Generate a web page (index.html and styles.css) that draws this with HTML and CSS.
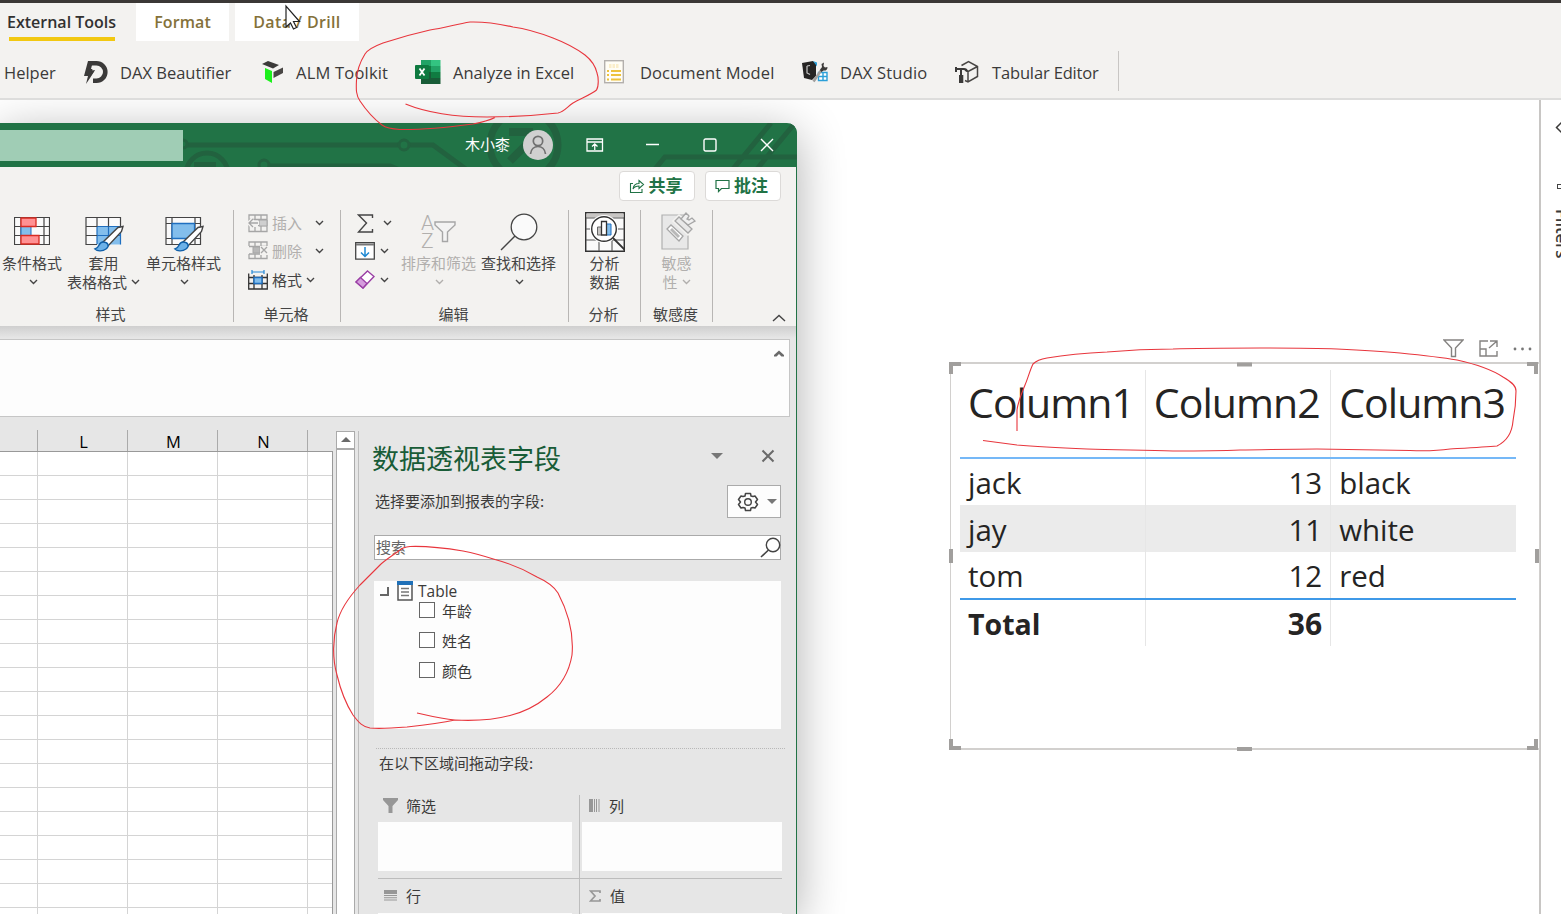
FILE: index.html
```html
<!DOCTYPE html>
<html lang="zh-CN">
<head>
<meta charset="utf-8">
<title>Power BI Desktop</title>
<link rel="stylesheet" href="styles.css">
</head>
<body>
<svg width="0" height="0" class="defs">
  <symbol id="chev" viewBox="0 0 9 6"><path d="M1 1l3.5 3.5L8 1" fill="none" stroke="currentColor" stroke-width="1.4"/></symbol>
</svg>

<header class="pbi-top">
  <nav class="tabs">
    <span class="tab tab-active">External Tools</span>
    <span class="tab tab-format">Format</span>
    <span class="tab tab-drill">Data / Drill</span>
  </nav>
  <div class="tools">
    <span class="tool">Helper</span>
    <span class="tool"><i class="ti w36"><svg width="24" height="25" viewBox="0 0 24 25"><path d="M6 3.200h6.500a8.300 8.300 0 0 1 0 17.600H9" fill="none" stroke="#3b3a39" stroke-width="4.600"/><path d="M4 1h5L7 9h5L2 24l2-8H0z" fill="#3b3a39"/><path d="M10.500 6L9 9.500h3.500L8 17" fill="none" stroke="#f3f2f0" stroke-width="1.300"/></svg></i>DAX Beautifier</span>
    <span class="tool"><i class="ti w34"><svg width="22" height="24" viewBox="0 0 22 24"><path d="M0 4l6-3 11 4-6 3.500z" fill="#3b3a39"/><path d="M11.500 12l9.500-4.500v5.500L11.500 18z" fill="#484644"/><path d="M3 8l7 3v12l-7-4z" fill="#1cf01c"/></svg></i><span class="alm">ALM Toolkit</span></span>
    <span class="tool"><i class="ti w38"><svg width="26" height="24" viewBox="0 0 26 24"><path d="M6 0h10v6H6z" fill="#21a366"/><path d="M16 0h9.500v6H16z" fill="#33c481"/><path d="M6 6h10v6H6z" fill="#107c41"/><path d="M16 6h9.500v6H16z" fill="#21a366"/><path d="M6 12h10v6H6z" fill="#185c37"/><path d="M16 12h9.500v6H16z" fill="#107c41"/><path d="M6 18h19.500v6H6z" fill="#185c37"/><rect x="0" y="5" width="14" height="14" rx="1" fill="#0e7a40"/><path d="M4.500 8.500l5 7M9.500 8.500l-5 7" stroke="#fff" stroke-width="1.800"/></svg></i>Analyze in Excel</span>
    <span class="tool"><i class="ti w36"><svg width="20" height="24" viewBox="0 0 20 24"><rect x=".7" y=".7" width="18.600" height="22" fill="#fffdf5" stroke="#b3b0ad" stroke-width="1.400"/><path d="M5 5h10M5 7h10" stroke="#f6dfa0" stroke-width="1.200" stroke-dasharray="2.500 1"/><path d="M3 11h2m2 0h10M3 15h2m2 0h10M3 19.500h2m2 0h10" stroke="#edc23c" stroke-width="1.900"/></svg></i><span class="doc">Document Model</span></span>
    <span class="tool"><i class="ti w38"><svg width="26" height="22" viewBox="0 0 26 22"><path d="M0 2l11-2 3 3v12l-4 4-8-2z" fill="#252423"/><path d="M5 5v7l3 1.500M5 5l3-.5" fill="none" stroke="#c8c8c8" stroke-width="1.200"/><path d="M11 0l4 1.500v4z" fill="#2a9fd8"/><path d="M16.500 11.500h8.500v8h-8.500zM16.500 15.500h8.500M21 11.500v8" fill="#fff" stroke="#2a9fd8" stroke-width="1.400"/><path d="M11.500 20.500L20 8" stroke="#a19f9d" stroke-width="2.600"/><path d="M18 9l2-3-.5-3 2.500-1.500L21.500 5l1.500 1.500L25.500 6c0 3-2 4-4 3.500L19.500 11z" fill="#3b3a39"/></svg></i><span class="alm">DAX Studio</span></span>
    <span class="tool"><i class="ti w37"><svg width="24" height="24" viewBox="0 0 24 24"><path d="M6.500 5.500L13.500 1.500l9 5v10l-9.500 5.500-3-1.500M13 21.500V11.500l9.500-5M13 11.500L10 10" fill="none" stroke="#484644" stroke-width="1.500"/><path d="M1 7v5M1 9h8q2.500 0 3 2.500" fill="none" stroke="#3b3a39" stroke-width="2"/><path d="M6 9v6" stroke="#3b3a39" stroke-width="2"/><path d="M4 15h4.300v8H4z" fill="#3b3a39"/></svg></i><span class="te">Tabular Editor</span></span>
    <span class="tool-end"></span>
  </div>
</header>

<main class="pbi-main">
  <section class="canvas">
    <div class="visual">
      <div class="visual-tools">
        <svg width="21" height="19" viewBox="0 0 21 19"><path d="M1 1h19l-7.500 8v8.500h-4V9z" fill="none" stroke="#858381" stroke-width="1.400"/></svg>
        <svg width="19" height="17" viewBox="0 0 19 17"><path d="M9 1H1v15h17v-5M1 9h6v7M11 1h7v6M18 1l-8 7" fill="none" stroke="#858381" stroke-width="1.400"/></svg>
        <svg width="19" height="4" viewBox="0 0 19 4"><circle cx="2" cy="2" r="1.400" fill="#777"/><circle cx="9.500" cy="2" r="1.400" fill="#777"/><circle cx="17" cy="2" r="1.400" fill="#777"/></svg>
      </div>
      <table class="data">
        <thead><tr><th>Column1</th><th class="c2">Column2</th><th>Column3</th></tr></thead>
        <tbody>
          <tr><td>jack</td><td class="num">13</td><td>black</td></tr>
          <tr class="alt"><td>jay</td><td class="num">11</td><td>white</td></tr>
          <tr><td>tom</td><td class="num">12</td><td>red</td></tr>
        </tbody>
        <tfoot><tr><td>Total</td><td class="num">36</td><td></td></tr></tfoot>
      </table>
      <svg class="handles" width="592" height="391" viewBox="0 0 592 391"><g fill="none" stroke="#a19f9d" stroke-width="4"><path d="M2 12V2H12M578 2h9V12M2 377v9H12M578 386h9V377"/><path d="M288 2.500h15M288 387h15M2 187v14M588 187v14"/></g></svg>
    </div>
  </section>
  <aside class="filters">
    <svg class="f-chev" width="10" height="14" viewBox="0 0 10 14"><path d="M8 1L2.500 6.500 8 12" fill="none" stroke="#3b3a39" stroke-width="1.500"/></svg>
    <i class="f-icon"></i>
    <span class="f-label">Filters</span>
  </aside>
</main>

<div class="excel">
  <div class="titlebar">
    <svg class="circuit" width="797" height="44" viewBox="0 0 797 44"><g fill="none" stroke="#22623f" stroke-width="5"><path d="M187 22h211M409 22h24l34 25"/><circle cx="404" cy="22" r="5" stroke-width="3"/><circle cx="183" cy="21" r="4" stroke-width="3"/><circle cx="207" cy="51" r="21"/><path d="M194 43h22" stroke-width="8"/><circle cx="264" cy="42" r="5" stroke-width="3"/><path d="M270 43h120l12 5"/><circle cx="524" cy="22" r="34" stroke-width="7"/><path d="M509 9h20v16M510 38l20-20" stroke-width="8"/><path d="M655 46l10-12h132M733 46l38-46M757 46l38-46"/></g></svg>
    <div class="searchbox"></div>
    <div class="user"><span class="uname">木小桼</span><span class="avatar"><svg width="18" height="20" viewBox="0 0 18 20"><circle cx="9" cy="6" r="4.700" fill="none" stroke="#707070" stroke-width="1.700"/><path d="M1.500 19c1-10 14-10 15 0" fill="none" stroke="#707070" stroke-width="1.700"/></svg></span></div>
    <svg class="wc wc1" width="18" height="14" viewBox="0 0 18 14"><path d="M1 1h15.500v12H1zM1 4h15.500M8.750 12V6M6 8.500L8.750 6l2.750 2.500" fill="none" stroke="#fff" stroke-width="1.300"/></svg>
    <svg class="wc wc2" width="13" height="14" viewBox="0 0 13 14"><path d="M0 6.500h13" stroke="#fff" stroke-width="1.300"/></svg>
    <svg class="wc wc3" width="14" height="14" viewBox="0 0 14 14"><rect x="1" y="1" width="12" height="12" rx="1.500" fill="none" stroke="#fff" stroke-width="1.400"/></svg>
    <svg class="wc wc4" width="14" height="14" viewBox="0 0 14 14"><path d="M1 1l12 12M13 1L1 13" stroke="#fff" stroke-width="1.400"/></svg>
  </div>

  <div class="ribbon">
    <div class="actions">
      <span class="action"><svg width="16" height="16" viewBox="0 0 16 16"><path d="M4 5.500H1.500v9H13V11M4 11C4.500 7.500 7 5.500 10 5.500V2.500l4.500 4L10 10.500V8C7.500 8 5.500 8.500 4 11z" fill="none" stroke="#217346" stroke-width="1.100"/></svg><span>共享</span></span>
      <span class="action"><svg width="15" height="14" viewBox="0 0 15 14"><path d="M1 1.500h13v8H6.500L3.500 12.500v-3H1z" fill="none" stroke="#217346" stroke-width="1.200"/></svg><span>批注</span></span>
    </div>
    <div class="groups">
      <div class="group g-style">
        <div class="gbody">
          <div class="big b1"><i><svg width="36" height="29" viewBox="0 0 36 29"><path d="M.5.500h35v27H.5zM7 .5v27M30 .5v27M.5 9.500h35M.5 18.500h35" fill="#fafafa" stroke="#444" stroke-width="1.200"/><path d="M7 9.500h10v9H7z" fill="#83beec" stroke="#1f6fc0"/><path d="M7 1h15v8.500H7zM7 18.500h18v8.500H7z" fill="#ff9193" stroke="#d92b22" stroke-width="1.300"/></svg></i><span>条件格式</span><svg class="cv"><use href="#chev"/></svg></div>
          <div class="big b2"><i><svg width="40" height="35" viewBox="0 0 40 35"><path d="M1 .5h34.500v27H1z" fill="#fafafa"/><path d="M12 9.500h23.500v18H12z" fill="#83beec"/><path d="M12 27V9.500h23.500V27.500M12 18.500h23M23.500 9.500v18" fill="none" stroke="#1f6fc0" stroke-width="1.200"/><path d="M12 27.500H1V.5h34.500v9M12 .5v9M23.500 .5v9M1 9.500h11M1 18.500h11" fill="none" stroke="#444" stroke-width="1.200"/><path d="M17 26L33 10.500l5-1-1.500 5L23 29z" fill="#fff" stroke="#444" stroke-width="1.400"/><path d="M10 32c5-1 3-7 8-7s7 4 3 7c-4 3-9 2-11 0z" fill="#6cb1e8" stroke="#0f5fa8" stroke-width="1.400"/></svg></i><span>套用</span><span>表格格式<svg class="cv"><use href="#chev"/></svg></span></div>
          <div class="big b3"><i><svg width="40" height="35" viewBox="0 0 40 35"><path d="M1 .5h34.500v27H1zM7 .5v27M30 .5v27M1 6.500h34M1 21.500h34" fill="#fafafa" stroke="#444" stroke-width="1.200"/><path d="M7 6.500h22.500v15H7z" fill="#83beec" stroke="#1f6fc0" stroke-width="1.300"/><path d="M17 26L33 10.500l5-1-1.500 5L23 29z" fill="#fff" stroke="#444" stroke-width="1.400"/><path d="M10 32c5-1 3-7 8-7s7 4 3 7c-4 3-9 2-11 0z" fill="#6cb1e8" stroke="#0f5fa8" stroke-width="1.400"/></svg></i><span>单元格样式</span><svg class="cv"><use href="#chev"/></svg></div>
        </div>
        <div class="glabel">样式</div>
      </div>
      <div class="group g-cells">
        <div class="gbody rows">
          <div class="small off"><svg width="20" height="19" viewBox="0 0 20 19"><path d="M1 1h18v16.500H1zM7 1v4M13 1v16M1 5.500h18M10 11.500h9M7 13v5" fill="none" stroke="#a6a6a6" stroke-width="1.300"/><path d="M11 6h8v6h-8z" fill="#cfcfcf" stroke="#a6a6a6"/><path d="M0 9h11M5 5L1 9l4 4" fill="none" stroke="#f3f2f0" stroke-width="4"/><path d="M1 9h9M5 5L1 9l4 4" fill="none" stroke="#a6a6a6" stroke-width="1.300"/></svg><span>插入</span><svg class="cv"><use href="#chev"/></svg></div>
          <div class="small off"><svg width="20" height="19" viewBox="0 0 20 19"><path d="M1 5V1h18v4M7 1v4M13 1v4M1 5.500h18M1 13h18M1 13v4.500h18V13M7 13v5M13 13v5" fill="none" stroke="#a6a6a6" stroke-width="1.300"/><path d="M5 6h7v6H5z" fill="#b8b8b8" stroke="#a6a6a6"/><path d="M12 5h8v9h-8z" fill="#f3f2f0"/><path d="M13 6l6 6M19 6l-6 6" stroke="#a6a6a6" stroke-width="1.300"/></svg><span>删除</span><svg class="cv"><use href="#chev"/></svg></div>
          <div class="small fmt"><svg width="20" height="20" viewBox="0 0 20 20"><path d="M.7 3.500v15.500h18.600V3.500M.7 7.500h18.600M.7 13.500h18.600M6 5v14M14 5v14" fill="none" stroke="#333" stroke-width="1.300"/><path d="M6 7.500h8v6H6z" fill="#83beec" stroke="#1f6fc0" stroke-width="1.400"/><path d="M4 2h12M4 0v4M16 0v4" stroke="#2488d8" stroke-width="1.200"/></svg><span>格式</span><svg class="cv"><use href="#chev"/></svg></div>
        </div>
        <div class="glabel">单元格</div>
      </div>
      <div class="group g-edit">
        <div class="gbody">
          <div class="mini rows">
            <div class="small sum"><svg width="17" height="19" viewBox="0 0 17 19"><path d="M15.500 4V1H1.500l8 8-8 9h14v-3" fill="none" stroke="#444" stroke-width="1.400"/></svg><svg class="cv"><use href="#chev"/></svg></div>
            <div class="small"><svg width="20" height="18" viewBox="0 0 20 18"><path d="M.7.700h18.600v16.500H.7z" fill="#fff" stroke="#444" stroke-width="1.300"/><path d="M1 2.500h18" stroke="#777" stroke-width="2"/><path d="M10 5v9M6 10.500l4 4 4-4" fill="none" stroke="#1e88d2" stroke-width="1.500"/></svg><svg class="cv"><use href="#chev"/></svg></div>
            <div class="small"><svg width="20" height="19" viewBox="0 0 20 19"><path d="M12.500 1L19 6.500 8 18 1 12z" fill="#fff" stroke="#9a3fa5" stroke-width="1.400"/><path d="M5.500 7.500L12 13.500 8 18 1 12z" fill="#d59ddd" stroke="#9a3fa5" stroke-width="1.300"/></svg><svg class="cv"><use href="#chev"/></svg></div>
          </div>
          <div class="big off sort"><i><span class="az"><b>A</b><b>Z</b></span><svg width="22" height="22" viewBox="0 0 22 22"><path d="M1 1h20v3l-7.500 7v9.500h-5V11L1 4z" fill="#f3f3f3" stroke="#a6a6a6" stroke-width="1.400"/></svg></i><span>排序和筛选</span><svg class="cv"><use href="#chev"/></svg></div>
          <div class="big find"><i><svg width="38" height="38" viewBox="0 0 38 38"><circle cx="24" cy="14" r="12.800" fill="#fafafa" stroke="#444" stroke-width="1.300"/><path d="M15 23L1 37" stroke="#444" stroke-width="1.500"/></svg></i><span>查找和选择</span><svg class="cv"><use href="#chev"/></svg></div>
        </div>
        <div class="glabel">编辑</div>
      </div>
      <div class="group g-an">
        <div class="gbody"><div class="big"><i><svg width="40" height="40" viewBox="0 0 40 40"><path d="M.7.700h38.600v38.600H.7z" fill="#fafafa" stroke="#333" stroke-width="1.500"/><path d="M1.500 1.500h37v4h-37z" fill="#c8c6c4"/><path d="M1 6h38M1 17h38M1 28h38M14 28v11M27 28v11" stroke="#555" stroke-width="1.100"/><circle cx="19" cy="17" r="14" fill="#fff"/><circle cx="19" cy="17" r="12.300" fill="#fff" stroke="#333" stroke-width="1.400"/><path d="M28 26l12 12" stroke="#333" stroke-width="1.800"/><path d="M12.500 15h4v8h-4z" fill="#c8c6c4" stroke="#666"/><path d="M21 12h5v11h-5z" fill="#83beec" stroke="#1f6fc0"/><path d="M16.500 9.500h5V23h-5z" fill="#fff" stroke="#333" stroke-width="1.300"/></svg></i><span>分析</span><span>数据</span></div></div>
        <div class="glabel">分析</div>
      </div>
      <div class="group g-sen">
        <div class="gbody"><div class="big off"><i><svg width="36" height="40" viewBox="0 0 36 40"><path d="M1 3h26v34H1z" fill="#e8e8e8" stroke="#b0b0b0" stroke-width="1.200"/><path d="M13 9l5-5 14 14-5 4z" fill="#f3f2f0" stroke="#f3f2f0" stroke-width="3"/><path d="M14 9l4-4 13 12-4 4z" fill="#e8e8e8" stroke="#a6a6a6" stroke-width="1.300"/><path d="M20 7l5-6 3 3-2 3 2 1 3-2 3 3-7 4z" fill="#f0f0f0" stroke="#a6a6a6" stroke-width="1.300"/><path d="M6 17l4-4 12 11-4 5z" fill="#fff" stroke="#a6a6a6" stroke-width="1.300"/><path d="M10 17l8 8" stroke="#b8b8b8" stroke-width="3"/></svg></i><span>敏感</span><span>性<svg class="cv"><use href="#chev"/></svg></span></div></div>
        <div class="glabel">敏感度</div>
      </div>
      <svg class="collapse" width="14" height="8" viewBox="0 0 14 8"><path d="M1 7l6-5.500L13 7" fill="none" stroke="#444" stroke-width="1.400"/></svg>
    </div>
  </div>

  <div class="formula"><svg width="10" height="7" viewBox="0 0 10 7"><path d="M0 6.500V5l5-4.500L10 5v1.500H7.500L5 4 2.500 6.500z" fill="#6a6a6a"/></svg></div>

  <div class="work">
    <div class="sheet">
      <div class="colheads"><span></span><span>L</span><span>M</span><span>N</span><span></span></div>
      <div class="cells"></div>
    </div>
    <div class="vscroll"><div class="up"></div></div>
    <div class="pane">
      <div class="ptitle"><h2>数据透视表字段</h2><i class="tri"></i><svg width="14" height="14" viewBox="0 0 14 14"><path d="M1.500 1.500l11 11M12.500 1.500l-11 11" stroke="#6a6a6a" stroke-width="2"/></svg></div>
      <div class="pchoose"><span>选择要添加到报表的字段:</span>
        <span class="gear"><svg width="22" height="22" viewBox="0 0 22 22"><path d="M8 5L8.500 2.500h5L14 5l2 .5L18 5l2.500 3.500L18.500 11l2 2.500L18 17l-2-.5-2 .5-.5 2.500h-5L8 17l-2-.5-2 .5-2.500-3.500L3.500 11l-2-2.500L4 5l2 .5z" fill="none" stroke="#444" stroke-width="1.500" stroke-linejoin="round"/><circle cx="11" cy="11" r="3.300" fill="none" stroke="#444" stroke-width="1.400"/></svg><i class="tri small-tri"></i></span></div>
      <div class="psearch"><span>搜索</span><svg width="21" height="21" viewBox="0 0 21 21"><circle cx="13" cy="8" r="6.700" fill="none" stroke="#444" stroke-width="1.400"/><path d="M8.500 13L1 20" stroke="#444" stroke-width="1.600"/></svg></div>
      <div class="fields">
        <div class="troot"><i class="expander"></i><svg width="16" height="20" viewBox="0 0 16 20"><path d="M1 1h14v18H1z" fill="#fff" stroke="#555" stroke-width="1.500"/><path d="M0 0h16v4H0z" fill="#1f70b8"/><path d="M4 7.500h8M4 11h8M4 14.500h8" stroke="#777" stroke-width="1.300"/></svg><span>Table</span></div>
        <div class="fld"><i></i><span>年龄</span></div>
        <div class="fld"><i></i><span>姓名</span></div>
        <div class="fld"><i></i><span>颜色</span></div>
      </div>
      <div class="dots"></div>
      <div class="pdrag">在以下区域间拖动字段:</div>
      <div class="areas">
        <div class="area left"><div class="ahead"><svg width="15" height="15" viewBox="0 0 15 15"><path d="M0 0h15v2L9.500 8v7h-4V8L0 2z" fill="#979797"/></svg>筛选</div><div class="abox"></div></div>
        <div class="area right"><div class="ahead"><svg width="11" height="13" viewBox="0 0 11 13"><path d="M0 0h4v13H0zM5 0h1v13H5zM7 0h1v13H7zM9.500 0h1v13h-1z" fill="#979797"/></svg>列</div><div class="abox"></div></div>
        <div class="area left"><div class="ahead"><svg width="13" height="11" viewBox="0 0 13 11"><path d="M0 0h13v4H0zM0 5h13v1H0zM0 7.200h13v1H0zM0 9.500h13v1H0z" fill="#979797"/></svg>行</div><div class="abox"></div></div>
        <div class="area right"><div class="ahead"><svg width="12" height="12" viewBox="0 0 12 12"><path d="M11 3V1H1.500l4.500 5-4.500 5H11V9" fill="none" stroke="#979797" stroke-width="1.700"/></svg>值</div><div class="abox"></div></div>
      </div>
    </div>
  </div>
</div>

<svg class="ink" width="1561" height="914" viewBox="0 0 1561 914">
  <g fill="none" stroke="#e8363d" stroke-width="1.100">
    <path d="M405.500 104C430 114 460 117 487 117C515 117 540 115 558 113C564 112 567 107 573 103C582 98 592 94 596.500 90C599 86 598.500 77 597 73C595 64 590 59 585 55C577 49 566 43 553 38C540 33 528 29 513 27C500 24 487 21.500 470 22C457 24 444 28 430 30C412 34 395 39 383 43C375 46 368 49 365 54C360 62 357 70 356.500 80C356 90 356 95 360 101C366 110 374 119 382 125C386 128 391 129 400 129.500C425 130 450 127 473 124C484 122 490 120 495 117.500"/>
    <path d="M417 713C430 716 441 719 455 720C474 721 493 720 510 715.500C524 712 536 706 547 697C560 687 569 673 572 655C574 633 568 612 558 593C553 585 546 581 537 577C522 568 508 563 495 559.500C484 556 473 553 463 551C445 548 425 546 410 546.500C405 547 402 548 400 550C392 556 385 560 380 565L360 585C349 597 340 610 337 623C333 638 332 658 337 675C341 692 346 704 353 715C359 723 363 727 370 728C380 729 394 728 407 727C425 725 441 723 455 720"/>
    <path d="M1017 431V410C1018 402 1021 395 1025 385C1028 378 1030 370 1033 364C1036 361 1041 359 1047 358C1065 355 1086 353 1107 352C1129 350 1151 349 1173 349C1200 348 1230 348 1260 348C1287 348 1312 348 1337 349C1360 350 1380 351 1400 353C1420 355 1439 357 1457 360C1475 364 1491 369 1503 377C1510 381 1516 385 1516 391C1516 401 1515 411 1513 421C1512 434 1505 442 1497 446C1485 447 1467 448 1450 449C1436 451 1423 451 1410 450.500L1317 449C1285 449 1262 450 1240 450C1217 451 1195 451 1173 451C1143 450 1115 450 1087 449C1062 448 1039 447 1017 445L983 440.500"/>
  </g>
  <path d="M286 6v21l4.500-4 3 6 3-1.500-3-6h6z" fill="#fff" stroke="#222" stroke-width="1.200"/>
</svg>
</body>
</html>
```
FILE: styles.css
```css
* { box-sizing: border-box; }
body { margin: 0; width: 1561px; height: 914px; overflow: hidden; position: relative; background: #fff; font-family: "Open Sans", "Noto Sans CJK SC", sans-serif; color: #3b3a39; display: flex; flex-direction: column; }
svg { display: block; flex: none; }
i { font-style: normal; }
.defs { position: absolute; }

.pbi-top { height: 100px; background: #f3f2f0; border-top: 3px solid #3b3836; border-bottom: 2px solid #dddddc; position: relative; z-index: 2; flex: none; }
.tabs { display: flex; height: 38px; padding-left: 7px; font-size: 16px; font-weight: 600; line-height: 39px; white-space: nowrap; }
.tab-active { width: 129px; background: linear-gradient(#f2c811, #f2c811) 2px 34px / 106px 4px no-repeat; color: #323130; }
.tab-format { width: 93px; margin-right: 6px; background: #fff; color: #84713a; text-align: center; letter-spacing: .1px; }
.tab-drill { width: 124px; background: #fff; color: #84713a; text-align: center; letter-spacing: .35px; }
.tools { display: grid; grid-template-columns: 80px 178px 153px 189px 198px 153px 163px 2px; padding-left: 4px; margin-top: 9px; height: 44px; font-size: 16.5px; white-space: nowrap; }
.tool { display: flex; align-items: center; height: 44px; }
.ti { flex: none; }
.w34 { width: 34px; } .w36 { width: 36px; } .w37 { width: 37px; } .w38 { width: 38px; }
.alm { letter-spacing: .2px; } .doc { letter-spacing: .1px; } .te { letter-spacing: -.15px; }
.tool-end { width: 1px; height: 40px; background: #c8c6c4; margin-top: 1px; }

.pbi-main { flex: 1; display: flex; }
.canvas { flex: 1; position: relative; border-right: 2px solid #c8c6c4; }
.filters { width: 20px; overflow: hidden; background: #fff; padding: 21px 0 0 13px; }
.f-icon { display: block; width: 14px; height: 5px; border: 1px solid #444; margin: 49px 0 0 3px; }
.f-label { display: block; writing-mode: vertical-rl; font-size: 17px; font-weight: 600; line-height: 22px; margin: 20px 0 0 -3px; letter-spacing: -.2px; }
.visual { position: absolute; left: 950px; top: 262px; width: 590px; height: 388px; border: 1.500px solid #d2d0ce; border-width: 2px 1px; padding: 6px 0 0 9px; }
.visual-tools { position: absolute; right: 7px; top: -25px; display: flex; gap: 15px; align-items: center; }
.handles { position: absolute; left: -2px; top: -2px; }
.data { border-collapse: collapse; table-layout: fixed; width: 556px; color: #252423; }
.data th, .data td { padding: 0 8px; text-align: left; font-size: 29.500px; border-right: 1px solid #e6e6e6; line-height: 40px; height: 47px; white-space: nowrap; }
.data th:last-child, .data td:last-child { border-right: 0; }
.data th { font-weight: 400; font-size: 41px; letter-spacing: -.950px; height: 88px; line-height: 60px; vertical-align: top; padding-top: 2px; }
.data thead tr { border-bottom: 2px solid #75b8f7; }
.data tbody td { padding-top: 2px; }
.data .num { text-align: right; }
.data .alt { background: #ebebeb; }
.data tfoot tr { border-top: 2px solid #3f99e8; }
.data tfoot td { font-weight: 700; font-size: 28.500px; padding-top: 2px; }
.data tfoot .num { font-size: 30px; }

.excel { position: absolute; left: 0; top: 123px; width: 797px; height: 791px; background: #e6e6e6; border-radius: 0 10px 0 0; border-right: 1px solid #217346; box-shadow: 0 10px 48px rgba(0,0,0,.32); z-index: 1; font-family: "Noto Sans CJK SC", sans-serif; font-size: 15px; }
.titlebar { position: relative; height: 44px; width: 797px; background: #217346; border-radius: 0 10px 0 0; overflow: hidden; display: flex; align-items: center; }
.circuit { position: absolute; left: 0; top: 0; }
.searchbox { width: 183px; height: 31px; background: #a0cdb5; position: relative; margin-top: 1px; }
.user { position: relative; margin-left: 282px; width: 88px; color: #fff; display: flex; align-items: center; justify-content: space-between; white-space: nowrap; }
.uname { padding-bottom: 3px; }
.avatar { width: 30px; height: 30px; border-radius: 50%; background: #d0d0d0; display: flex; align-items: center; justify-content: center; }
.wc { position: relative; }
.wc1 { margin-left: 33px; } .wc2 { margin-left: 42px; } .wc3 { margin-left: 44px; } .wc4 { margin-left: 43px; }

.ribbon { height: 159px; background: #f3f2f0; padding-top: 4px; color: #444; }
.actions { display: flex; justify-content: flex-end; gap: 10px; padding-right: 15px; height: 29px; }
.action { width: 76px; height: 30px; border: 1px solid #dcdad8; border-radius: 4px; background: #fff; color: #217346; font-weight: 700; font-size: 17px; display: flex; align-items: center; justify-content: center; gap: 4px; line-height: 26px; }
.action svg { margin-left: -3px; }
.action span { padding-bottom: 2px; }
.groups { display: flex; margin-top: 10px; height: 112px; }
.group { display: flex; flex-direction: column; border-right: 1px solid #b8b6b4; height: 112px; flex: none; }
.g-style { width: 234px; } .g-cells { width: 107px; } .g-edit { width: 228px; } .g-an, .g-sen { width: 72px; }
.gbody { height: 94px; display: flex; flex: none; }
.glabel { text-align: center; line-height: 20px; padding-right: 2px; }
.g-style .glabel { padding-right: 12px; }
.big { display: flex; flex-direction: column; align-items: center; line-height: 19px; white-space: nowrap; }
.big i { height: 43px; display: flex; align-items: center; flex: none; }
.big > span { display: flex; align-items: center; height: 19px; flex: none; }
.cv { width: 9px; height: 6px; color: #444; }
.big > .cv { margin: 7px 0 0 2px; }
.big span .cv { margin-left: 4px; }
.b1 { width: 64px; } .b2 { width: 79px; } .b3 { width: 81px; }
.b2 i, .b3 i { padding: 5px 0 0 3px; }
.g-an .big, .g-sen .big { width: 71px; }
.g-sen .big i { padding-left: 5px; }
.off { color: #b1afad; }
.off > .cv, .off span .cv { color: #b1afad; }
.rows { display: flex; flex-direction: column; }
.small { height: 29px; display: flex; align-items: center; flex: none; }
.rows .small:first-child { height: 26px; }
.g-cells .small { padding-left: 14px; }
.g-cells .small span { margin: 0 13px 0 4px; padding-bottom: 1px; }
.g-cells .small .cv { color: #444; }
.g-cells .fmt span { margin-right: 4px; }
.mini { width: 60px; padding-left: 14px; }
.mini .cv { margin-left: 5px; }
.mini .sum { padding-left: 2px; }
.mini .sum .cv { margin-left: 9px; }
.sort { width: 75px; } .find { width: 75px; margin-left: 5px; }
.az { display: flex; flex-direction: column; font: 21px/18px Roboto, sans-serif; }
.az b { font-weight: 300; height: 18px; }
.collapse { margin: 104px 0 0 59px; }

.formula { margin: 13px 6px 0 0; height: 78px; background: #fdfdfd; border: 1px solid #c6c6c6; border-left: 0; padding: 10px 5px; display: flex; justify-content: flex-end; position: relative; }
.formula::before { content: ""; position: absolute; left: 0; right: -7px; top: -14px; height: 12px; background: linear-gradient(#cfcfcf, #e6e6e6); }

.work { display: flex; padding-top: 13px; height: 497px; overflow: hidden; }
.sheet { width: 333px; flex: none; }
.colheads { display: flex; height: 22px; color: #000; border-bottom: 1px solid #999; font: 16.500px/23px "Open Sans", sans-serif; overflow: hidden; }
.colheads span { width: 90px; flex: none; text-align: center; border-right: 1px solid #aaa; padding-left: 2px; }
.colheads span:first-child { width: 38px; }
.colheads span:last-child { border: 0; width: 25px; }
.cells { height: 462px; border-right: 1px solid #999; background: repeating-linear-gradient(to right, #d4d4d4 0 1px, transparent 1px 90px) 37px 0 / 360px 100% no-repeat, repeating-linear-gradient(#fff 0 23px, #d4d4d4 23px 24px); }
.vscroll { width: 19px; margin: 1px 0 0 3px; border: 1px solid #aaa; border-bottom: 0; background: #fff; }
.up { height: 18px; border-bottom: 2px solid #aaa; display: flex; justify-content: center; padding-top: 5px; }
.up::before { content: ""; width: 0; height: 0; border: 5px solid transparent; border-top: 0; border-bottom-color: #6a6a6a; }
.pane { margin: 1px 0 0 3px; border-left: 1px solid #bdbdbd; width: 438px; padding: 0 15px; flex: none; height: 483px; overflow: hidden; }
.ptitle { display: flex; align-items: center; height: 50px; }
.ptitle h2 { margin: 4px 0 0 -2px; font-size: 27px; font-weight: 400; color: #185c37; line-height: 40px; width: 339px; }
.tri { width: 0; height: 0; border: 6px solid transparent; border-bottom: 0; border-top-color: #777; flex: none; }
.ptitle svg { margin-left: 38px; }
.pchoose { display: flex; justify-content: space-between; align-items: center; margin-top: 4px; height: 33px; padding-left: 1px; width: 407px; }
.pchoose > span:first-child { padding-bottom: 2px; }
.gear { width: 54px; height: 33px; border: 1px solid #aaa; background: #fdfdfd; display: flex; align-items: center; padding-left: 9px; gap: 8px; }
.small-tri { border-width: 5px 5px 0; }
.psearch { margin-top: 17px; width: 407px; height: 25px; border: 1px solid #aaa; background: #fff; display: flex; justify-content: space-between; align-items: center; padding-left: 1px; color: #666; line-height: 21px; }
.psearch span { padding-bottom: 2px; }
.psearch svg { margin-right: -1px; }
.fields { margin-top: 21px; width: 407px; height: 148px; background: #fdfdfd; }
.troot { display: flex; height: 20px; align-items: center; font-family: "Open Sans", sans-serif; font-size: 15.500px; padding-left: 6px; }
.expander { width: 9px; height: 9px; border: solid #666; border-width: 0 2px 2px 0; margin-right: 8px; }
.troot span { margin-left: 5px; }
.fld { height: 30px; display: flex; align-items: center; padding-left: 45px; gap: 7px; }
.fld:nth-child(2) { margin-top: -5px; }
.fld i { width: 16px; height: 16px; border: 1px solid #666; background: #fff; margin-top: -3px; }
.fld span { padding-bottom: 1px; }
.dots { margin: 19px -4px 0 2px; border-top: 1px dotted #b8b8b8; }
.pdrag { margin: 3px 0 0 5px; line-height: 22px; }
.areas { margin: 21px 0 0 4px; width: 404px; display: grid; grid-template-columns: 202px 202px; }
.area { height: 84px; border-bottom: 1px solid #bdbdbd; }
.left { border-right: 1px solid #bdbdbd; padding-right: 7px; }
.right { padding-left: 2px; }
.ahead { height: 27px; display: flex; align-items: center; padding: 0 0 6px 5px; }
.ahead svg { margin-right: 8px; }
.right .ahead { padding-left: 7px; }
.right .ahead svg, .left:nth-child(3) .ahead svg { margin-right: 9px; }
.left:nth-child(3) .ahead { padding-left: 6px; }
.area:nth-child(n+3) .ahead { height: 34px; padding-top: 5px; }
.abox { height: 49px; background: #fdfdfd; }
.ink { position: absolute; left: 0; top: 0; z-index: 5; pointer-events: none; }
```
